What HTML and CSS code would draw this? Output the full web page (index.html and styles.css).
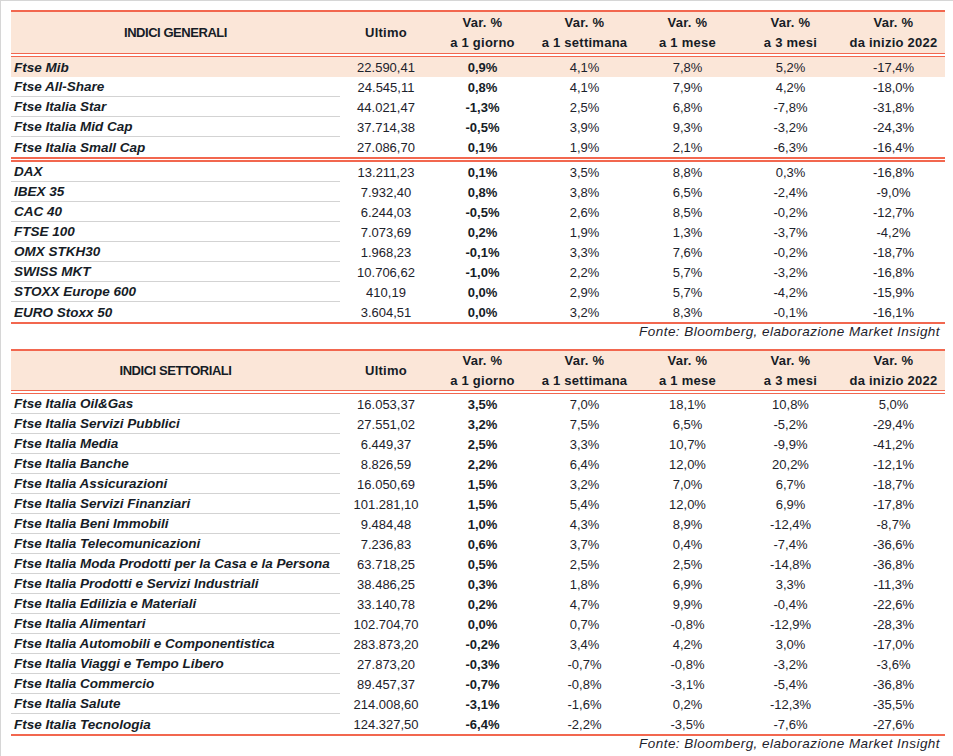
FILE: index.html
```html
<!DOCTYPE html>
<html lang="it">
<head>
<meta charset="utf-8">
<title>Indici</title>
<link rel="stylesheet" href="styles.css">
</head>
<body>
<div class="frame">
  <section class="tbl">
    <div class="head h1">
      <div class="hc title">INDICI GENERALI</div>
      <div class="hc">Ultimo</div>
      <div class="hc"><span>Var. %</span><span>a 1 giorno</span></div>
      <div class="hc"><span>Var. %</span><span>a 1 settimana</span></div>
      <div class="hc"><span>Var. %</span><span>a 1 mese</span></div>
      <div class="hc"><span>Var. %</span><span>a 3 mesi</span></div>
      <div class="hc"><span>Var. %</span><span>da inizio 2022</span></div>
    </div>
    <div class="dbl"></div>
    <div class="row hl"><div class="nm">Ftse Mib</div><div class="v">22.590,41</div><div class="v b">0,9%</div><div class="v">4,1%</div><div class="v">7,8%</div><div class="v">5,2%</div><div class="v">-17,4%</div></div>
    <div class="row sep"><div class="nm">Ftse All-Share</div><div class="v">24.545,11</div><div class="v b">0,8%</div><div class="v">4,1%</div><div class="v">7,9%</div><div class="v">4,2%</div><div class="v">-18,0%</div></div>
    <div class="row sep"><div class="nm">Ftse Italia Star</div><div class="v">44.021,47</div><div class="v b">-1,3%</div><div class="v">2,5%</div><div class="v">6,8%</div><div class="v">-7,8%</div><div class="v">-31,8%</div></div>
    <div class="row sep"><div class="nm">Ftse Italia Mid Cap</div><div class="v">37.714,38</div><div class="v b">-0,5%</div><div class="v">3,9%</div><div class="v">9,3%</div><div class="v">-3,2%</div><div class="v">-24,3%</div></div>
    <div class="row"><div class="nm">Ftse Italia Small Cap</div><div class="v">27.086,70</div><div class="v b">0,1%</div><div class="v">1,9%</div><div class="v">2,1%</div><div class="v">-6,3%</div><div class="v">-16,4%</div></div>
    <div class="dbl thick"></div>
    <div class="row sep"><div class="nm">DAX</div><div class="v">13.211,23</div><div class="v b">0,1%</div><div class="v">3,5%</div><div class="v">8,8%</div><div class="v">0,3%</div><div class="v">-16,8%</div></div>
    <div class="row sep"><div class="nm">IBEX 35</div><div class="v">7.932,40</div><div class="v b">0,8%</div><div class="v">3,8%</div><div class="v">6,5%</div><div class="v">-2,4%</div><div class="v">-9,0%</div></div>
    <div class="row sep"><div class="nm">CAC 40</div><div class="v">6.244,03</div><div class="v b">-0,5%</div><div class="v">2,6%</div><div class="v">8,5%</div><div class="v">-0,2%</div><div class="v">-12,7%</div></div>
    <div class="row sep"><div class="nm">FTSE 100</div><div class="v">7.073,69</div><div class="v b">0,2%</div><div class="v">1,9%</div><div class="v">1,3%</div><div class="v">-3,7%</div><div class="v">-4,2%</div></div>
    <div class="row sep"><div class="nm">OMX STKH30</div><div class="v">1.968,23</div><div class="v b">-0,1%</div><div class="v">3,3%</div><div class="v">7,6%</div><div class="v">-0,2%</div><div class="v">-18,7%</div></div>
    <div class="row sep"><div class="nm">SWISS MKT</div><div class="v">10.706,62</div><div class="v b">-1,0%</div><div class="v">2,2%</div><div class="v">5,7%</div><div class="v">-3,2%</div><div class="v">-16,8%</div></div>
    <div class="row sep"><div class="nm">STOXX Europe 600</div><div class="v">410,19</div><div class="v b">0,0%</div><div class="v">2,9%</div><div class="v">5,7%</div><div class="v">-4,2%</div><div class="v">-15,9%</div></div>
    <div class="row"><div class="nm">EURO Stoxx 50</div><div class="v">3.604,51</div><div class="v b">0,0%</div><div class="v">3,2%</div><div class="v">8,3%</div><div class="v">-0,1%</div><div class="v">-16,1%</div></div>
  </section>
  <p class="src">Fonte: Bloomberg, elaborazione Market Insight</p>

  <section class="tbl second">
    <div class="head h2">
      <div class="hc title">INDICI SETTORIALI</div>
      <div class="hc">Ultimo</div>
      <div class="hc"><span>Var. %</span><span>a 1 giorno</span></div>
      <div class="hc"><span>Var. %</span><span>a 1 settimana</span></div>
      <div class="hc"><span>Var. %</span><span>a 1 mese</span></div>
      <div class="hc"><span>Var. %</span><span>a 3 mesi</span></div>
      <div class="hc"><span>Var. %</span><span>da inizio 2022</span></div>
    </div>
    <div class="dbl"></div>
    <div class="row sep"><div class="nm">Ftse Italia Oil&amp;Gas</div><div class="v">16.053,37</div><div class="v b">3,5%</div><div class="v">7,0%</div><div class="v">18,1%</div><div class="v">10,8%</div><div class="v">5,0%</div></div>
    <div class="row sep"><div class="nm">Ftse Italia Servizi Pubblici</div><div class="v">27.551,02</div><div class="v b">3,2%</div><div class="v">7,5%</div><div class="v">6,5%</div><div class="v">-5,2%</div><div class="v">-29,4%</div></div>
    <div class="row sep"><div class="nm">Ftse Italia Media</div><div class="v">6.449,37</div><div class="v b">2,5%</div><div class="v">3,3%</div><div class="v">10,7%</div><div class="v">-9,9%</div><div class="v">-41,2%</div></div>
    <div class="row sep"><div class="nm">Ftse Italia Banche</div><div class="v">8.826,59</div><div class="v b">2,2%</div><div class="v">6,4%</div><div class="v">12,0%</div><div class="v">20,2%</div><div class="v">-12,1%</div></div>
    <div class="row sep"><div class="nm">Ftse Italia Assicurazioni</div><div class="v">16.050,69</div><div class="v b">1,5%</div><div class="v">3,2%</div><div class="v">7,0%</div><div class="v">6,7%</div><div class="v">-18,7%</div></div>
    <div class="row sep"><div class="nm">Ftse Italia Servizi Finanziari</div><div class="v">101.281,10</div><div class="v b">1,5%</div><div class="v">5,4%</div><div class="v">12,0%</div><div class="v">6,9%</div><div class="v">-17,8%</div></div>
    <div class="row sep"><div class="nm">Ftse Italia Beni Immobili</div><div class="v">9.484,48</div><div class="v b">1,0%</div><div class="v">4,3%</div><div class="v">8,9%</div><div class="v">-12,4%</div><div class="v">-8,7%</div></div>
    <div class="row sep"><div class="nm">Ftse Italia Telecomunicazioni</div><div class="v">7.236,83</div><div class="v b">0,6%</div><div class="v">3,7%</div><div class="v">0,4%</div><div class="v">-7,4%</div><div class="v">-36,6%</div></div>
    <div class="row sep"><div class="nm">Ftse Italia Moda Prodotti per la Casa e la Persona</div><div class="v">63.718,25</div><div class="v b">0,5%</div><div class="v">2,5%</div><div class="v">2,5%</div><div class="v">-14,8%</div><div class="v">-36,8%</div></div>
    <div class="row sep"><div class="nm">Ftse Italia Prodotti e Servizi Industriali</div><div class="v">38.486,25</div><div class="v b">0,3%</div><div class="v">1,8%</div><div class="v">6,9%</div><div class="v">3,3%</div><div class="v">-11,3%</div></div>
    <div class="row sep"><div class="nm">Ftse Italia Edilizia e Materiali</div><div class="v">33.140,78</div><div class="v b">0,2%</div><div class="v">4,7%</div><div class="v">9,9%</div><div class="v">-0,4%</div><div class="v">-22,6%</div></div>
    <div class="row sep"><div class="nm">Ftse Italia Alimentari</div><div class="v">102.704,70</div><div class="v b">0,0%</div><div class="v">0,7%</div><div class="v">-0,8%</div><div class="v">-12,9%</div><div class="v">-28,3%</div></div>
    <div class="row sep"><div class="nm">Ftse Italia Automobili e Componentistica</div><div class="v">283.873,20</div><div class="v b">-0,2%</div><div class="v">3,4%</div><div class="v">4,2%</div><div class="v">3,0%</div><div class="v">-17,0%</div></div>
    <div class="row sep"><div class="nm">Ftse Italia Viaggi e Tempo Libero</div><div class="v">27.873,20</div><div class="v b">-0,3%</div><div class="v">-0,7%</div><div class="v">-0,8%</div><div class="v">-3,2%</div><div class="v">-3,6%</div></div>
    <div class="row sep"><div class="nm">Ftse Italia Commercio</div><div class="v">89.457,37</div><div class="v b">-0,7%</div><div class="v">-0,8%</div><div class="v">-3,1%</div><div class="v">-5,4%</div><div class="v">-36,8%</div></div>
    <div class="row sep"><div class="nm">Ftse Italia Salute</div><div class="v">214.008,60</div><div class="v b">-3,1%</div><div class="v">-1,6%</div><div class="v">0,2%</div><div class="v">-12,3%</div><div class="v">-35,5%</div></div>
    <div class="row"><div class="nm">Ftse Italia Tecnologia</div><div class="v">124.327,50</div><div class="v b">-6,4%</div><div class="v">-2,2%</div><div class="v">-3,5%</div><div class="v">-7,6%</div><div class="v">-27,6%</div></div>
  </section>
  <p class="src">Fonte: Bloomberg, elaborazione Market Insight</p>
</div>
</body>
</html>
```
FILE: styles.css
```css
html, body {
  margin: 0;
  padding: 0;
  background: #ffffff;
}

body {
  width: 953px;
  height: 756px;
  overflow: hidden;
  font-family: "Liberation Sans", Arial, sans-serif;
  color: #161c26;
}

.frame {
  border-top: 1px solid #d6d6d6;
  border-left: 1px solid #d6d6d6;
  padding: 9px 0 0 10px;
  height: 756px;
  box-sizing: border-box;
}

.tbl {
  width: 934px;
  border-top: 2px solid #f2674f;
  border-bottom: 2px solid #f2674f;
}

.tbl.second {
  margin-top: 9px;
}

.head,
.row {
  display: grid;
  grid-template-columns: 329px 92px 101px 103px 103px 103px 103px;
}

.head {
  background: #fbe6d8;
}

.h1 { height: 41px; }
.h2 { height: 39px; }

.hc {
  display: flex;
  flex-direction: column;
  align-items: center;
  justify-content: center;
  font-weight: bold;
  font-size: 13px;
  line-height: 20px;
  letter-spacing: 0.25px;
  white-space: nowrap;
}

.hc.title {
  letter-spacing: -0.45px;
}

.dbl {
  height: 2px;
  border-top: 1px solid #f2674f;
  border-bottom: 1px solid #f2674f;
}

.dbl.thick {
  height: 1px;
  border-top-width: 2px;
  border-bottom-width: 2px;
}

.row {
  height: 20px;
}

.row.hl {
  background: #fbe6d8;
}

.nm,
.v {
  display: flex;
  align-items: center;
  white-space: nowrap;
  box-sizing: border-box;
}

.nm {
  padding-left: 3px;
  font-weight: bold;
  font-style: italic;
  font-size: 13.5px;
}

.row.sep .nm {
  border-bottom: 1px solid #d3d3d3;
}

.v {
  justify-content: center;
  font-size: 13px;
  color: #1d222b;
}

.v.b {
  font-weight: bold;
  color: #161c26;
}

.src {
  margin: 0;
  width: 934px;
  height: 16px;
  line-height: 16px;
  box-sizing: border-box;
  padding-right: 5px;
  text-align: right;
  font-style: italic;
  font-size: 13.5px;
  letter-spacing: 0.45px;
  color: #1d222b;
}
```
